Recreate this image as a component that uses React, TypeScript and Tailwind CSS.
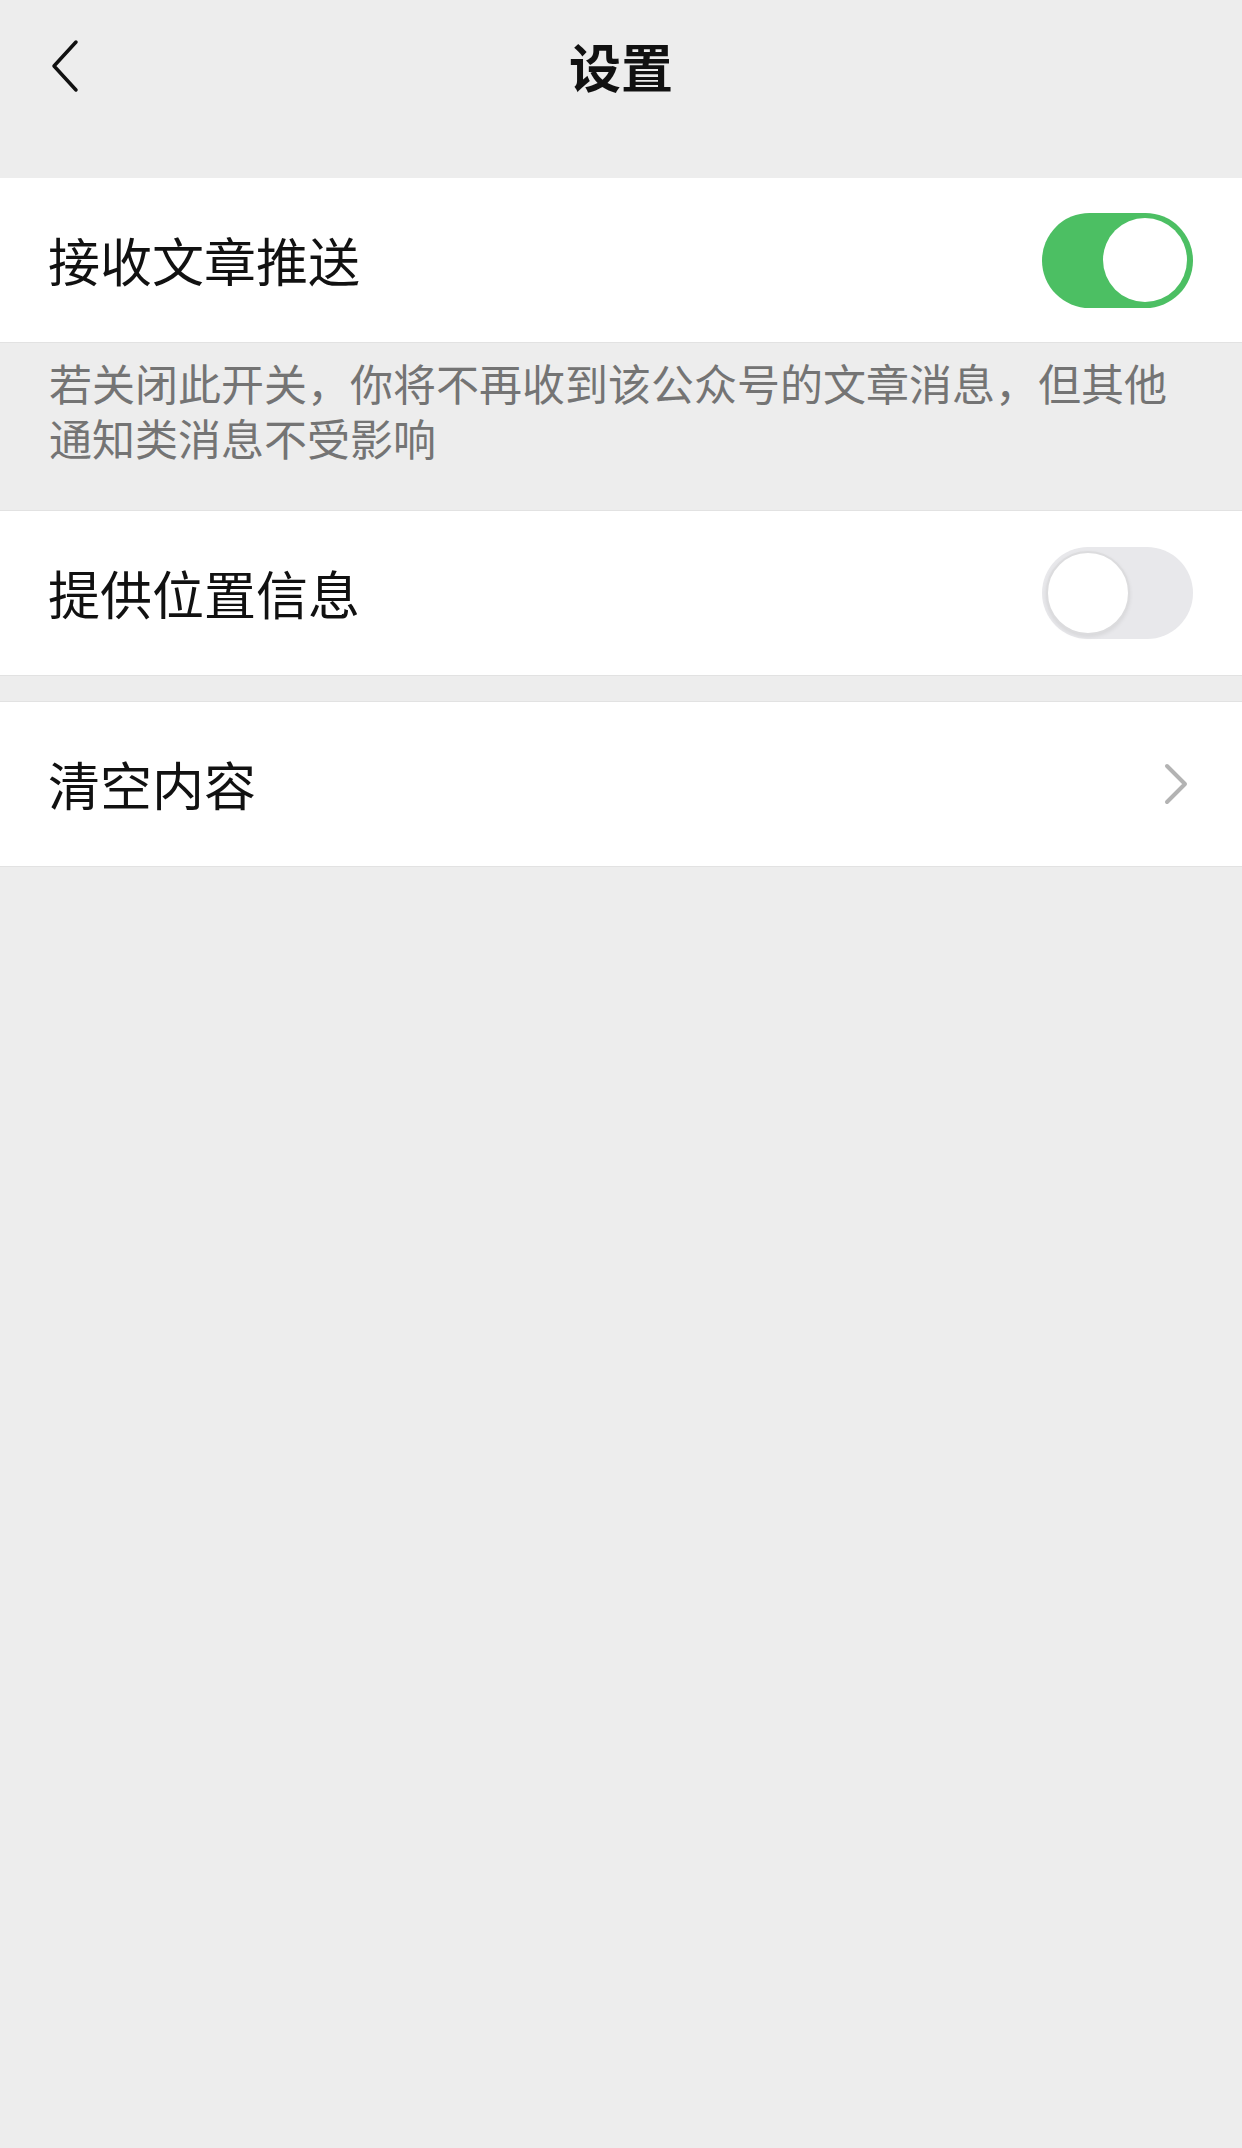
import React from "react";

function Toggle({ on }: { on: boolean }) {
  if (on) {
    return (
      <div className="w-[151px] h-[95px] rounded-full bg-[#4cbf63] flex items-center justify-end pr-[6px]">
        <div className="w-[84px] h-[84px] rounded-full bg-white" />
      </div>
    );
  }
  return (
    <div className="w-[151px] h-[92px] rounded-full bg-[#e8e8eb] flex items-center justify-start pl-[4px]">
      <div className="w-[84px] h-[84px] rounded-full bg-white border-[2px] border-[#dcdcde] shadow-[0_2px_4px_rgba(0,0,0,0.08)]" />
    </div>
  );
}

export default function App() {
  return (
    <div
      className="min-h-[2148px] w-full bg-[#ededed] text-[#111111]"
      style={{ fontFamily: '"Noto Sans CJK SC", "Noto Sans", sans-serif' }}
    >
      {/* Header */}
      <div className="h-[178px]">
        <div className="h-[132px] flex items-center px-[40px]">
          <div className="w-[80px] flex items-center">
            <svg width="40" height="54" viewBox="0 0 40 54" fill="none" className="ml-[10px]">
              <path d="M26 3 L4 27 L26 51" stroke="#111" strokeWidth="3.5" strokeLinecap="round" strokeLinejoin="round" />
            </svg>
          </div>
          <div className="flex-1 text-center text-[52px] leading-none font-semibold">设置</div>
          <div className="w-[80px]" />
        </div>
      </div>

      {/* Row 1 */}
      <div className="h-[165px] bg-white border-b border-[#e2e2e2] flex items-center justify-between pl-[48px] pr-[49px]">
        <span className="text-[52px] leading-none">接收文章推送</span>
        <Toggle on={true} />
      </div>

      {/* Description */}
      <div className="h-[167px] pl-[49px] pr-[70px] pt-[12px] text-[43px] leading-[55px] text-[#747474]">
        若关闭此开关，你将不再收到该公众号的文章消息，但其他通知类消息不受影响
      </div>

      {/* Row 2 */}
      <div className="h-[166px] bg-white border-y border-[#e2e2e2] flex items-center justify-between pl-[48px] pr-[49px]">
        <span className="text-[52px] leading-none">提供位置信息</span>
        <Toggle on={false} />
      </div>

      <div className="h-[25px]" />

      {/* Row 3 */}
      <div className="h-[166px] bg-white border-y border-[#e2e2e2] flex items-center justify-between pl-[48px] pr-[53px]">
        <span className="text-[52px] leading-none">清空内容</span>
        <svg width="26" height="42" viewBox="0 0 26 42" fill="none">
          <path d="M4 3 L22 21 L4 39" stroke="#b3b3b3" strokeWidth="4" strokeLinecap="round" strokeLinejoin="round" />
        </svg>
      </div>
    </div>
  );
}
